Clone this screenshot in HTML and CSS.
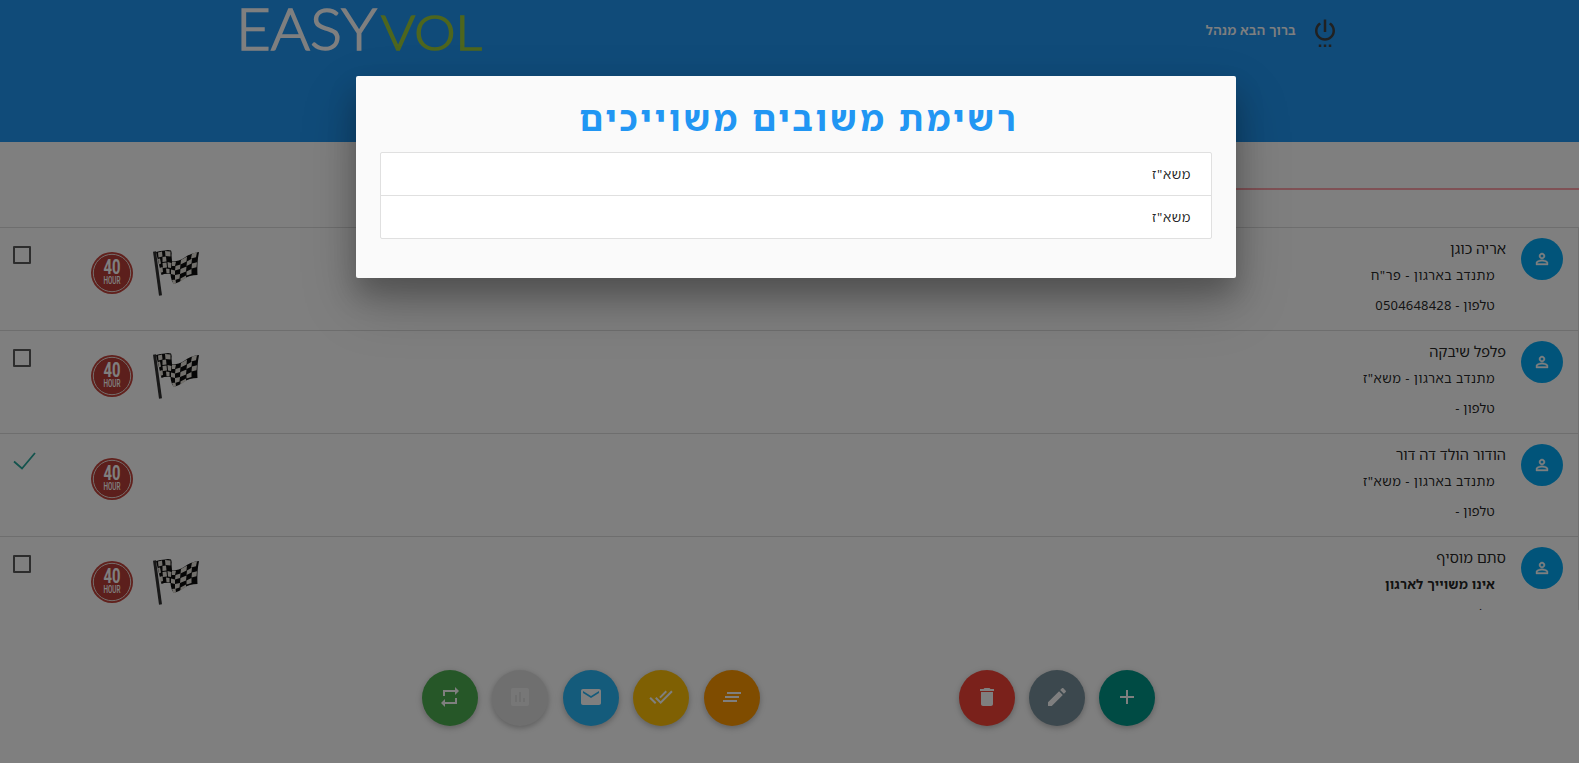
FILE: index.html
```html
<!DOCTYPE html>
<html lang="he" dir="rtl">
<head>
<meta charset="utf-8">
<title>EASYVOL</title>
<link rel="stylesheet" href="styles.css">
</head>
<body>
<svg class="defs" aria-hidden="true">
  <symbol id="person" viewBox="0 0 24 24"><path d="M12 5.900a2.100 2.100 0 1 1 0 4.200 2.100 2.100 0 0 1 0-4.200m0 9c2.970 0 6.100 1.460 6.100 2.100v1.100H5.900V17c0-.64 3.130-2.100 6.100-2.100M12 4C9.790 4 8 5.790 8 8s1.790 4 4 4 4-1.790 4-4-1.790-4-4-4zm0 9c-2.670 0-8 1.340-8 4v3h16v-3c0-2.660-5.330-4-8-4z"/></symbol>
  <symbol id="flag" viewBox="0 0 46 46">
    <path d="M3 2q4-1.500 9-1.500 3-1 6 0 1 2 .5 4.500l.5 6q5 1 12-3 6-5 15-6l-1 6q-1 8-.5 17-8 0-14 4-5 4-9.500 5-3-3-3.500-10-5-1-9 1z" fill="#0c0c0c"/>
    <g fill="#e4e0d8">
      <path d="M5 2.500l4-1 .5 5-4 1zM12 1l5.500.5v5l-5-.5zM9.500 7l3.500-.5.5 5-4 .5zM5 9l2-.5 1 5-2 1zM14.500 12l4 1-.5 5-3-.5zM9.500 13l4-.5.500 5-4 .5zM6.500 18l3-1 .5 5-3 1zM13 18.500l3.500.5v4.500l-3-.5z"/>
      <path d="M19 11.500l4 .2-1 4.300h-3zM28 10l6-3.500-.5 5-6 3zM39 3.500l5-1.200-1 5-5 1.200zM22.500 16l5-1.500-.5 4.500-5 1.500zM34 11.500l5-3-.5 5-5 2.500zM18 19.500l4 1v4.500l-4-1zM27.500 19l6-2.500-.5 5-6 2.500zM39 13.500l5-1.200-.5 5-5 1.200zM22 25l5-1-.5 4.500-4.500 1.500zM33.500 21.500l5-2.500v5l-5 1.500zM19 30l3.500-.5.5 4-2.500.8zM27.500 28.500l5.500-3v2.500l-5.500 3.500z"/>
    </g>
    <path d="M1.500 1.500L7.500 45.500" stroke="#303030" stroke-width="3"/>
  </symbol>
</svg>

<header class="header">
  <div class="user">
    <svg class="power" viewBox="0 0 24 24"><path d="M7 24h2v-2H7v2zm4 0h2v-2h-2v2zm2-22h-2v10h2V2zm3.560 2.440l-1.450 1.450C16.840 6.940 18 8.830 18 11c0 3.310-2.690 6-6 6s-6-2.690-6-6c0-2.170 1.160-4.060 2.880-5.120L7.440 4.440C5.360 5.880 4 8.280 4 11c0 4.420 3.580 8 8 8s8-3.580 8-8c0-2.720-1.360-5.120-3.440-6.560zM15 24h2v-2h-2v2z"/></svg>
    <span class="welcome">ברוך הבא מנהל</span>
  </div>
  <svg class="logo" viewBox="0 0 250 80" direction="ltr">
    <text x="-3" y="50" class="logo-easy" textLength="141" lengthAdjust="spacingAndGlyphs">EASY</text>
    <text x="142" y="50" class="logo-vol" textLength="101" lengthAdjust="spacingAndGlyphs">VOL</text>
  </svg>
</header>

<div class="search"></div>

<main class="list">
  <section class="row">
    <span class="avatar"><svg><use href="#person"/></svg></span>
    <div class="info"><h3>אריה כוגן</h3><p class="org">מתנדב בארגון - פר"ח</p><p>טלפון - 0504648428</p></div>
    <svg class="flag"><use href="#flag"/></svg>
    <svg class="badge" viewBox="0 0 42 42"><circle cx="21" cy="21" r="21"/><circle class="ring" cx="21" cy="21" r="18.700"/><text x="21" y="22" class="badge-num" textLength="17" lengthAdjust="spacingAndGlyphs">40</text><text x="21" y="31.500" class="badge-unit" textLength="17" lengthAdjust="spacingAndGlyphs">HOUR</text></svg>
    <i class="box"></i>
  </section>
  <section class="row">
    <span class="avatar"><svg><use href="#person"/></svg></span>
    <div class="info"><h3>פלפל שיבקה</h3><p class="org">מתנדב בארגון - משא"ז</p><p>טלפון -</p></div>
    <svg class="flag"><use href="#flag"/></svg>
    <svg class="badge" viewBox="0 0 42 42"><circle cx="21" cy="21" r="21"/><circle class="ring" cx="21" cy="21" r="18.700"/><text x="21" y="22" class="badge-num" textLength="17" lengthAdjust="spacingAndGlyphs">40</text><text x="21" y="31.500" class="badge-unit" textLength="17" lengthAdjust="spacingAndGlyphs">HOUR</text></svg>
    <i class="box"></i>
  </section>
  <section class="row">
    <span class="avatar"><svg><use href="#person"/></svg></span>
    <div class="info"><h3>הודור הולד דה דור</h3><p class="org">מתנדב בארגון - משא"ז</p><p>טלפון -</p></div>
    <svg class="badge" viewBox="0 0 42 42"><circle cx="21" cy="21" r="21"/><circle class="ring" cx="21" cy="21" r="18.700"/><text x="21" y="22" class="badge-num" textLength="17" lengthAdjust="spacingAndGlyphs">40</text><text x="21" y="31.500" class="badge-unit" textLength="17" lengthAdjust="spacingAndGlyphs">HOUR</text></svg>
    <svg class="check" viewBox="0 0 23 18"><path d="M1 9.500l8 7L22 1"/></svg>
  </section>
  <section class="row">
    <span class="avatar"><svg><use href="#person"/></svg></span>
    <div class="info"><h3>סתם מוסיף</h3><p class="strong">אינו משוייך לארגון</p><p>טלפון -</p></div>
    <svg class="flag"><use href="#flag"/></svg>
    <svg class="badge" viewBox="0 0 42 42"><circle cx="21" cy="21" r="21"/><circle class="ring" cx="21" cy="21" r="18.700"/><text x="21" y="22" class="badge-num" textLength="17" lengthAdjust="spacingAndGlyphs">40</text><text x="21" y="31.500" class="badge-unit" textLength="17" lengthAdjust="spacingAndGlyphs">HOUR</text></svg>
    <i class="box"></i>
  </section>
</main>

<footer class="actions">
  <div class="group">
    <button class="fab green"><svg viewBox="0 0 24 24"><path d="M7 7h10v3l4-4-4-4v3H5v6h2V7zm10 10H7v-3l-4 4 4 4v-3h12v-6h-2v4z"/></svg></button>
    <button class="fab grey"><svg viewBox="0 0 24 24"><path d="M19 3H5c-1.100 0-2 .9-2 2v14c0 1.100.9 2 2 2h14c1.100 0 2-.9 2-2V5c0-1.100-.9-2-2-2zM9 17H7v-7h2v7zm4 0h-2V7h2v10zm4 0h-2v-4h2v4z"/></svg></button>
    <button class="fab blue"><svg viewBox="0 0 24 24"><path d="M20 4H4c-1.100 0-1.990.9-1.990 2L2 18c0 1.100.9 2 2 2h16c1.100 0 2-.9 2-2V6c0-1.100-.9-2-2-2zm0 4l-8 5-8-5V6l8 5 8-5v2z"/></svg></button>
    <button class="fab amber"><svg viewBox="0 0 24 24"><path d="M18 7l-1.410-1.410-6.340 6.340 1.410 1.410L18 7zm4.240-1.410L11.660 16.170 7.480 12l-1.410 1.410L11.660 19l12-12-1.420-1.410zM.41 13.410L6 19l1.410-1.410L1.830 12 .41 13.410z"/></svg></button>
    <button class="fab orange"><svg viewBox="0 0 24 24"><path d="M5 13h14v-2H5v2zm-2 4h14v-2H3v2zM7 7v2h14V7H7z"/></svg></button>
  </div>
  <div class="group">
    <button class="fab red"><svg viewBox="0 0 24 24"><path d="M6 19c0 1.100.9 2 2 2h8c1.100 0 2-.9 2-2V7H6v12zM19 4h-3.500l-1-1h-5l-1 1H5v2h14V4z"/></svg></button>
    <button class="fab slate"><svg viewBox="0 0 24 24"><path d="M3 17.250V21h3.750L17.810 9.940l-3.750-3.750L3 17.250zM20.710 7.040c.39-.39.39-1.020 0-1.410l-2.340-2.340c-.39-.39-1.020-.39-1.410 0l-1.830 1.830 3.750 3.750 1.830-1.830z"/></svg></button>
    <button class="fab teal"><svg viewBox="0 0 24 24"><path d="M19 13h-6v6h-2v-6H5v-2h6V5h2v6h6v2z"/></svg></button>
  </div>
</footer>

<div class="overlay"></div>
<div class="modal">
  <h2>רשימת משובים משוייכים</h2>
  <ul class="collection"><li>משא"ז</li><li>משא"ז</li></ul>
</div>
</body>
</html>
```

FILE: styles.css
```css
* { box-sizing: border-box; margin: 0; padding: 0; }
body { width: 1579px; height: 763px; overflow: hidden; background: #fff; color: rgba(0,0,0,.87); font-family: "Noto Sans", "Noto Sans Hebrew", "Open Sans", sans-serif; }
.defs { position: absolute; width: 0; height: 0; }
.header { height: 142px; background: #2196f3; display: flex; justify-content: space-between; align-items: flex-start; padding: 0 239px; }
.user { display: flex; align-items: flex-start; gap: 14px; padding: 17px 0 0; }
.power { width: 30px; height: 30px; fill: #424242; }
.welcome { color: #fff; font-size: 13px; font-weight: 600; line-height: 26px; letter-spacing: .25px; }
.logo { width: 250px; height: 80px; overflow: visible; direction: ltr; fill: #fff; stroke: #fff; stroke-width: 1.5; font-family: Lato, sans-serif; font-weight: 300; }
.logo-easy { font-size: 58px; }
.logo-vol { font-size: 48px; fill: #9ccc3c; stroke: #9ccc3c; }
.search { width: 790px; height: 48px; border-bottom: 2px solid #ffa2aa; margin-bottom: 37px; }
.list { height: 383px; overflow: hidden; border-right: 1px solid #e0e0e0; }
.row { height: 103px; border-top: 1px solid #ddd; display: flex; align-items: flex-start; padding: 10px 15px 0 13px; }
.avatar { width: 42px; height: 42px; border-radius: 50%; background: #03a9f4; display: flex; align-items: center; justify-content: center; }
.avatar svg { width: 18px; height: 18px; fill: #fff; stroke: #fff; stroke-width: .5; }
.info { margin: -2px 15px 0 auto; }
.info h3 { font-size: 14.6px; font-weight: 400; line-height: 24px; }
.info p { font-size: 13px; line-height: 30px; padding-right: 11px; letter-spacing: .2px; }
.info h3 + p { margin-top: 0; }
.info .org { letter-spacing: .5px; }
.info .strong { font-weight: 700; }
.flag { width: 46px; height: 46px; margin: 12px 0 0 20px; }
.badge { width: 42px; height: 42px; margin: 14px 0 0 60px; fill: #c2423a; }
.badge .ring { fill: #b93f38; stroke: #e8dcd8; stroke-width: 1; }
.badge-num, .badge-unit { font-family: Roboto, sans-serif; font-weight: 700; text-anchor: middle; fill: #fff; direction: ltr; }
.badge-num { font-size: 20px; }
.badge-unit { font-size: 10.5px; font-weight: 500; }
.box { width: 18px; height: 18px; border: 2px solid #5a5a5a; border-radius: 1px; margin-top: 8px; }
.check { width: 23px; height: 18px; margin: 8px 0 0; fill: none; stroke: #26a69a; stroke-width: 1.8; }
.row:has(.check) .badge { margin-left: 55px; }
.actions { direction: ltr; display: flex; justify-content: space-between; padding: 60px 424px 0 422px; }
.group { display: flex; gap: 14.500px; }
.fab { width: 56px; height: 56px; border: 0; border-radius: 50%; padding-bottom: 2px; display: flex; align-items: center; justify-content: center; box-shadow: 0 2px 5px rgba(0,0,0,.16), 0 2px 10px rgba(0,0,0,.12); }
.group + .group { gap: 14px; }
.fab svg { width: 24px; height: 24px; fill: #fff; }
.green { background: #4caf50; }
.grey { background: #dfdfdf; }
.grey svg { opacity: .5; }
.grey, .amber { position: relative; left: -.6px; }
.blue { background: #29b6f6; }
.amber { background: #ffc107; }
.orange { background: #ff9800; }
.red { background: #f44336; }
.slate { background: #78909c; }
.teal { background: #009688; }
.overlay { position: absolute; inset: 0; background: rgba(0,0,0,.5); }
.modal { position: absolute; left: 356px; top: 76px; width: 880px; height: 202px; border-radius: 2px; background: #fafafa; padding: 22px 24px 24px; box-shadow: 0 16px 28px rgba(0,0,0,.22), 0 25px 55px rgba(0,0,0,.21); }
.modal h2 { color: #2196f3; font-size: 34px; font-weight: 700; line-height: 40px; letter-spacing: 3.1px; text-align: center; padding-left: 6px; }
.collection { list-style: none; margin-top: 14px; border: 1px solid #e0e0e0; border-radius: 2px; background: #fff; }
.collection li { height: 42px; padding: 0 20px; font-size: 13px; line-height: 42px; letter-spacing: .6px; }
.collection li + li { height: 43px; border-top: 1px solid #e0e0e0; }
```
